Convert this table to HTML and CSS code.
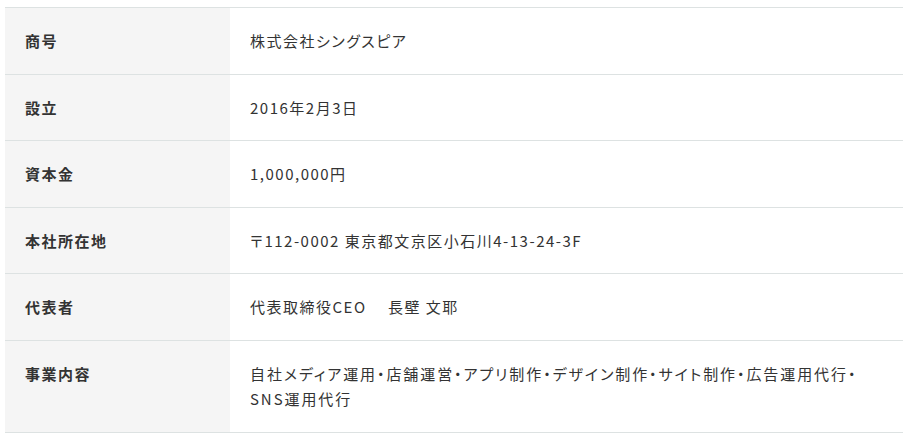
FILE: index.html
```html
<!DOCTYPE html>
<html lang="ja">
<head>
<meta charset="utf-8">
<title>会社概要</title>
<link rel="stylesheet" href="styles.css">
</head>
<body>
<div class="wrap">
  <table class="company">
    <tbody>
      <tr><th>商号</th><td>株式会社シングスピア</td></tr>
      <tr><th>設立</th><td>2016年2月3日</td></tr>
      <tr><th>資本金</th><td>1,000,000円</td></tr>
      <tr><th>本社所在地</th><td>〒112-0002 東京都文京区小石川4-13-24-3F</td></tr>
      <tr><th>代表者</th><td>代表取締役CEO　 長壁 文耶</td></tr>
      <tr><th>事業内容</th><td class="services">自社メディア運用・店舗運営・アプリ制作・デザイン制作・サイト制作・広告運用代行・<br>SNS運用代行</td></tr>
    </tbody>
  </table>
</div>
</body>
</html>
```
FILE: styles.css
```css
html, body {
  margin: 0;
  padding: 0;
  background: #fff;
}
.wrap {
  padding: 7px 5px 0 5px;
}
.company {
  width: 898px;
  border-collapse: collapse;
  font-family: "Noto Sans CJK JP", "Noto Sans", sans-serif;
  font-size: 15px;
  letter-spacing: 0.1em;
  font-feature-settings: "palt";
  color: #333;
}
.company th,
.company td {
  border-top: 1px solid #dde2e2;
  border-bottom: 1px solid #dde2e2;
  padding: 20px 20px;
  line-height: 1.7;
  text-align: left;
  vertical-align: top;
}
.company th {
  width: 185px;
  background: #f5f5f5;
  font-weight: 700;
}
.company td {
  font-weight: 400;
}
.company td.services {
  letter-spacing: 0.128em;
}
```
